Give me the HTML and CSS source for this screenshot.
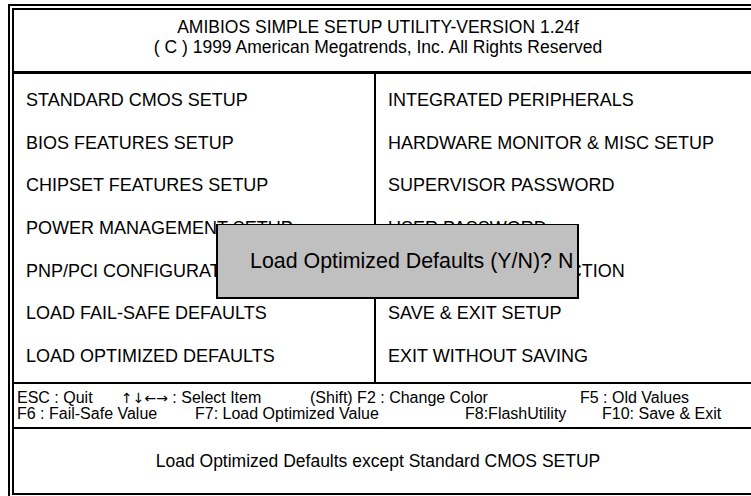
FILE: index.html
```html
<!DOCTYPE html>
<html lang="en">
<head>
    <meta charset="UTF-8">
    <meta name="viewport" content="width=device-width, initial-scale=1.0">
    <title>AMIBIOS Simple Setup Utility</title>
    <link rel="stylesheet" href="styles.css">
</head>
<body>
    <div class="frame">
        <div class="header">
            <div>AMIBIOS SIMPLE SETUP UTILITY-VERSION 1.24f</div>
            <div>( C ) 1999 American Megatrends, Inc. All Rights Reserved</div>
        </div>

        <div class="menu">
            <div class="col">
                <div class="item">STANDARD CMOS SETUP</div>
                <div class="item">BIOS FEATURES SETUP</div>
                <div class="item">CHIPSET FEATURES SETUP</div>
                <div class="item">POWER MANAGEMENT SETUP</div>
                <div class="item">PNP/PCI CONFIGURATION</div>
                <div class="item">LOAD FAIL-SAFE DEFAULTS</div>
                <div class="item">LOAD OPTIMIZED DEFAULTS</div>
            </div>
            <div class="col col-right">
                <div class="item">INTEGRATED PERIPHERALS</div>
                <div class="item">HARDWARE MONITOR &amp; MISC SETUP</div>
                <div class="item">SUPERVISOR PASSWORD</div>
                <div class="item">USER PASSWORD</div>
                <div class="item">IDE HDD AUTO DETECTION</div>
                <div class="item">SAVE &amp; EXIT SETUP</div>
                <div class="item">EXIT WITHOUT SAVING</div>
            </div>
        </div>

        <div class="keys">
            <div class="keyline">
                <span class="key w104">ESC : Quit</span><span class="key w189"><span class="arrows">↑↓←→</span> : Select Item</span><span class="key w270">(Shift) F2 : Change Color</span><span class="key">F5 : Old Values</span>
            </div>
            <div class="keyline">
                <span class="key w178">F6 : Fail-Safe Value</span><span class="key w270">F7: Load Optimized Value</span><span class="key w137">F8:FlashUtility</span><span class="key">F10: Save &amp; Exit</span>
            </div>
        </div>

        <div class="notice">Load Optimized Defaults except Standard CMOS SETUP</div>
    </div>

    <!-- confirm box sits on top of the menu -->
    <div class="dialog">Load Optimized Defaults (Y/N)? N</div>
</body>
</html>
```

FILE: styles.css
```css
html, body {
    margin: 0;
    padding: 0;
    width: 751px;
    height: 496px;
    overflow: hidden;
    background-color: #fff;
}
body {
    position: relative;
    font-family: "Liberation Sans", Arial, sans-serif;
    color: #000;
}
.frame {
    margin: 4px 0 0 8px;
    width: 760px;
    height: 483px;
    border: 6px double #000;
    border-right: none;
    display: flex;
    flex-direction: column;
}
.header {
    height: 53px;
    padding: 0 32px 8px 0;
    border-bottom: 3px solid #000;
    display: flex;
    flex-direction: column;
    justify-content: center;
    align-items: center;
    font-size: 17.5px;
    line-height: 20px;
}
.menu {
    height: 299px;
    padding: 5px 0 4px;
    border-bottom: 2px solid #000;
    display: grid;
    grid-template-columns: 360px 1fr;
    font-size: 18px;
}
.col {
    display: grid;
    grid-template-rows: repeat(7, 1fr);
    margin: -5px 0 -4px;
    padding: 5px 0 4px 12px;
}
.col-right {
    border-left: 2px solid #000;
}
.item {
    display: flex;
    align-items: center;
    white-space: nowrap;
}
.keys {
    height: 32px;
    padding: 6px 0 5px 3px;
    border-bottom: 2px solid #000;
    font-size: 16px;
    line-height: 16px;
}
.keyline {
    white-space: nowrap;
}
.key { display: inline-block; }
.arrows {
    font-family: "DejaVu Sans", sans-serif;
    font-size: 14px;
}
.w104 { width: 104px; }
.w189 { width: 189px; }
.w270 { width: 270px; }
.w178 { width: 178px; }
.w137 { width: 137px; }
.notice {
    flex: 1;
    display: flex;
    align-items: center;
    justify-content: center;
    padding-right: 32px;
    font-size: 17.5px;
}
.dialog {
    position: absolute;
    left: 216px;
    top: 224px;
    width: 327px;
    height: 72px;
    padding-left: 32px;
    border: 2px solid #000;
    border-top-width: 1px;
    background-color: #c0c0c0;
    display: flex;
    align-items: center;
    font-size: 21.4px;
}
```
